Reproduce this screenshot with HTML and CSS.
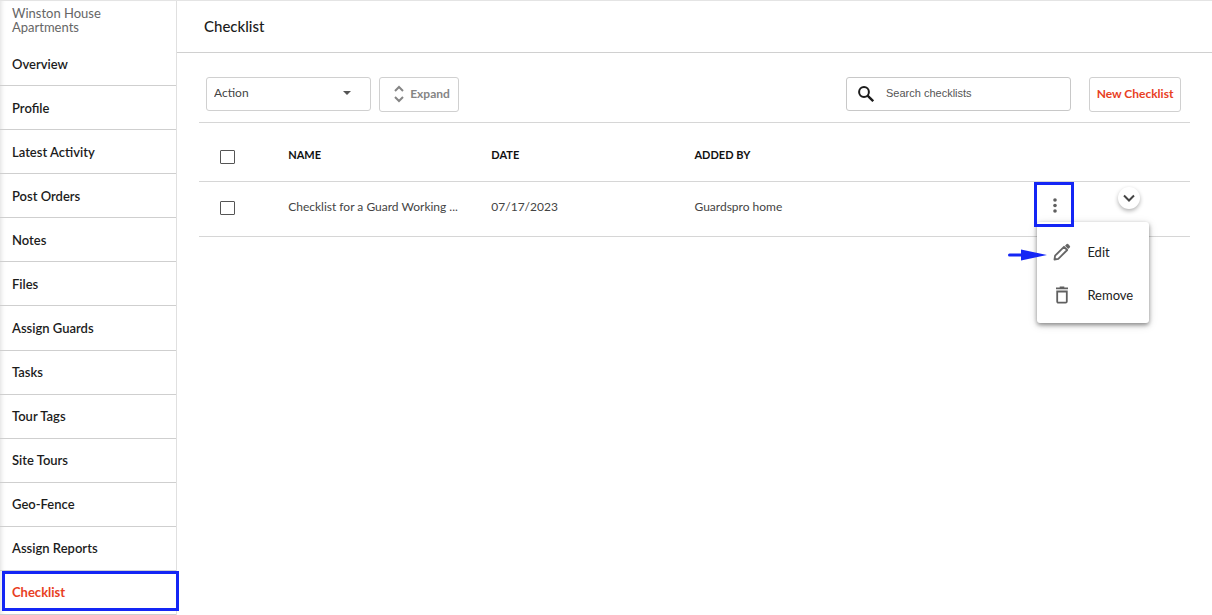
FILE: index.html
```html
<!DOCTYPE html>
<html lang="en">
<head>
<meta charset="utf-8">
<meta name="viewport" content="width=device-width, initial-scale=1">
<title>Checklist</title>
<link rel="stylesheet" href="styles.css">
</head>
<body>
<div class="app">
  <aside class="sidebar">
    <div class="site-name">Winston House Apartments</div>
    <nav class="nav">
      <a class="nav-link" href="#">Overview</a>
      <a class="nav-link" href="#">Profile</a>
      <a class="nav-link" href="#">Latest Activity</a>
      <a class="nav-link" href="#">Post Orders</a>
      <a class="nav-link" href="#">Notes</a>
      <a class="nav-link" href="#">Files</a>
      <a class="nav-link" href="#">Assign Guards</a>
      <a class="nav-link" href="#">Tasks</a>
      <a class="nav-link" href="#">Tour Tags</a>
      <a class="nav-link" href="#">Site Tours</a>
      <a class="nav-link" href="#">Geo-Fence</a>
      <a class="nav-link" href="#">Assign Reports</a>
      <a class="nav-link active" href="#" aria-current="page">Checklist</a>
    </nav>
  </aside>
  <main class="main">
    <header class="page-header"><h1 class="title">Checklist</h1></header>
    <div class="content">
      <div class="toolbar">
        <div class="select-wrap">
          <select class="action" aria-label="Action"><option>Action</option></select>
          <svg class="caret" width="8" height="4" viewBox="0 0 8 4" aria-hidden="true"><path d="M0 0h8L4 4z" fill="#555"/></svg>
        </div>
        <button class="btn expand" type="button">
          <svg width="10" height="18" viewBox="0 0 10 18" fill="none" stroke="#858585" stroke-width="2" aria-hidden="true"><path d="M1 6l4-4 4 4M1 12l4 4 4-4"/></svg>
          Expand
        </button>
        <label class="search">
          <svg width="16" height="16" viewBox="0 0 16 16" fill="none" stroke="#1c1c1c" aria-hidden="true"><circle cx="6" cy="6" r="4.9" stroke-width="2"/><path d="M9.6 9.6l5.6 5.6" stroke-width="2.4"/></svg>
          <input class="search-input" type="text" placeholder="Search checklists" aria-label="Search checklists">
        </label>
        <button class="btn new" type="button">New Checklist</button>
      </div>
      <table class="table">
        <colgroup><col class="c-check"><col class="c-text"><col class="c-text"><col class="c-added"><col class="c-menu"><col class="c-more"></colgroup>
        <thead>
          <tr>
            <th class="check-cell"><input class="check" type="checkbox" aria-label="Select all"></th>
            <th>NAME</th><th>DATE</th><th>ADDED BY</th><th></th><th></th>
          </tr>
        </thead>
        <tbody>
          <tr>
            <td class="check-cell"><input class="check" type="checkbox" aria-label="Select checklist"></td>
            <td>Checklist for a Guard Working ...</td>
            <td>07/17/2023</td>
            <td>Guardspro home</td>
            <td class="menu-cell">
              <button class="dots" type="button" aria-label="Row options">
                <svg width="4" height="16" viewBox="0 0 4 16" fill="#5f5f5f" aria-hidden="true"><circle cx="2" cy="3" r="1.8"/><circle cx="2" cy="8.5" r="1.8"/><circle cx="2" cy="14" r="1.8"/></svg>
              </button>
              <div class="menu">
                <button class="menu-item" type="button">
                  <svg width="18" height="18" viewBox="0 0 18 18" aria-hidden="true"><path d="M1.5 16.5l.6-3.8L11 3.8l3.2 3.2-8.9 8.9z" fill="none" stroke="#666" stroke-width="1.8" stroke-linejoin="round"/><path d="M12 2.8l1.7-1.7q.7-.6 1.4 0l1.8 1.8q.6.7 0 1.4L15.2 6z" fill="#666"/></svg>
                  Edit
                </button>
                <button class="menu-item" type="button">
                  <svg width="18" height="18" viewBox="0 0 18 18" fill="none" stroke="#606060" stroke-width="1.8" aria-hidden="true"><path d="M3 2.4h12M6.7 1.3h4.6M4.2 5.5h9.6v10q0 1.2-1.2 1.2H5.4q-1.2 0-1.2-1.2z"/></svg>
                  Remove
                </button>
              </div>
              <svg class="pointer" width="39" height="12" viewBox="0 0 39 12" fill="#1426f5" aria-hidden="true"><path d="M1.5 4.5H13V.5L39 6 13 11.5V7.5H1.5A1.5 1.5 0 0 1 1.5 4.5z"/></svg>
            </td>
            <td class="more-cell">
              <button class="more" type="button" aria-label="Show details">
                <svg width="12" height="8" viewBox="0 0 12 8" fill="none" stroke="#444" stroke-width="2" aria-hidden="true"><path d="M1 1.5l5 5 5-5"/></svg>
              </button>
            </td>
          </tr>
        </tbody>
      </table>
    </div>
  </main>
</div>
</body>
</html>
```
FILE: styles.css
```css
* { box-sizing: border-box; }

body {
  margin: 0;
  background: #fff;
  color: #1c1c1c;
  font-family: Lato, "Open Sans", sans-serif;
  font-size: 12px;
}

button, input, select { font: inherit; color: inherit; }
button { cursor: pointer; }

.app {
  display: flex;
  min-height: 100vh;
  border-top: 1px solid #e4e4e4;
}

.sidebar {
  display: flex;
  flex-direction: column;
  flex: 0 0 177px;
  border-right: 1px solid #e0e0e0;
  box-shadow: inset 5px 0 5px -4px #ddd;
}

.site-name {
  padding: 5px 50px 8px 12px;
  font-size: 13px;
  line-height: 14px;
  color: #666;
}

.nav {
  display: flex;
  flex: 1;
  flex-direction: column;
}

.nav-link {
  display: flex;
  flex: 1 0 44px;
  align-items: center;
  padding-left: 12px;
  border-bottom: 1px solid #cfcfcf;
  color: #1c1c1c;
  font-size: 13px;
  font-weight: 600;
  text-decoration: none;
}

.nav-link.active {
  position: relative;
  color: #e8401f;
  font-weight: 700;
}

.nav-link.active::after {
  content: "";
  position: absolute;
  inset: 0 -3px 3px 2px;
  border: 3px solid #1426f5;
}

.main { flex: 1; min-width: 0; }

.page-header {
  padding: 15px 27px 16px;
  border-bottom: 1px solid #d0d0d0;
}

.title {
  margin: 0;
  font-size: 15px;
  font-weight: 500;
  line-height: 20px;
}

.content { padding: 24px 22px; }

.toolbar {
  display: flex;
  align-items: flex-start;
  padding: 0 9px 10px 7px;
}

.select-wrap { position: relative; margin-right: 8px; }

.action {
  display: block;
  appearance: none;
  width: 165px;
  height: 34px;
  padding: 0 7px 3px;
  border: 1px solid #d0d0d0;
  border-radius: 3px;
  background: #fff;
  color: #444;
  font-size: 12px;
}

.caret {
  position: absolute;
  top: 14px;
  right: 20px;
  pointer-events: none;
}

.btn {
  display: flex;
  align-items: center;
  justify-content: center;
  height: 35px;
  padding: 0 8px 2px;
  border: 1px solid #d0d0d0;
  border-radius: 3px;
  background: #fff;
  font-size: 12px;
  font-weight: 700;
}

.expand {
  gap: 6px;
  width: 80px;
  padding-left: 14px;
  color: #858585;
}

.search {
  display: flex;
  align-items: center;
  gap: 12px;
  width: 225px;
  height: 34px;
  margin-right: 18px;
  margin-left: auto;
  padding: 0 11px;
  border: 1px solid #c8c8c8;
  border-radius: 3px;
}

.search-input {
  flex: 1;
  min-width: 0;
  padding: 0 0 2px;
  border: 0;
  outline: 0;
  font-family: "Liberation Sans", Arial, sans-serif;
  font-size: 11px;
}

.search-input::placeholder { color: #555; opacity: 1; }

.new { width: 92px; color: #e8401f; white-space: nowrap; }

.table {
  width: 100%;
  border-top: 1px solid #d6d6d6;
  border-collapse: separate;
  border-spacing: 0;
  table-layout: fixed;
}

.c-check { width: 9%; }
.c-text { width: 20.5%; }
.c-added { width: 34.3%; }
.c-menu { width: 5%; }

.table th, .table td {
  padding: 0;
  border-bottom: 1px solid #d6d6d6;
  text-align: left;
}

.table th {
  height: 59px;
  padding-top: 5px;
  color: #111;
  font-size: 11px;
  font-weight: 700;
}

.table td {
  height: 55px;
  padding-bottom: 6px;
  color: #444;
  font-size: 12px;
}

.table .check-cell { padding: 0 0 2px 21px; }
.table th.check-cell { padding: 10px 0 0 21px; }

.check {
  display: block;
  appearance: none;
  width: 15px;
  height: 14px;
  margin: 0;
  border: 1px solid #555;
  border-radius: 1px;
}

.check:checked { background: #1426f5; }

.table .menu-cell { position: relative; padding: 0; }

.dots {
  display: flex;
  align-items: center;
  justify-content: center;
  position: absolute;
  z-index: 2;
  top: 0;
  left: 0;
  width: 40px;
  height: 45px;
  padding: 0 0 0 2px;
  border: 3px solid #1426f5;
  background: none;
}

.menu {
  position: absolute;
  z-index: 1;
  top: 40px;
  left: 3px;
  width: 112px;
  padding: 8px 0 7px;
  border-radius: 3px;
  background: #fff;
  box-shadow: 0 2px 4px rgba(0, 0, 0, .4), 0 2px 10px rgba(0, 0, 0, .15);
}

.menu-item {
  display: flex;
  align-items: center;
  gap: 16px;
  width: 100%;
  height: 43px;
  padding: 0 0 0 16px;
  border: 0;
  background: none;
  color: #222;
  font-size: 13px;
}

.pointer {
  position: absolute;
  z-index: 3;
  top: 67px;
  left: -26px;
}

.table .more-cell { padding: 5px 0 0 34px; vertical-align: top; }

.more {
  display: flex;
  align-items: center;
  justify-content: center;
  width: 22px;
  height: 22px;
  padding: 0;
  border: 0;
  border-radius: 50%;
  background: #fff;
  box-shadow: 0 2px 4px rgba(0, 0, 0, .3);
}
```
